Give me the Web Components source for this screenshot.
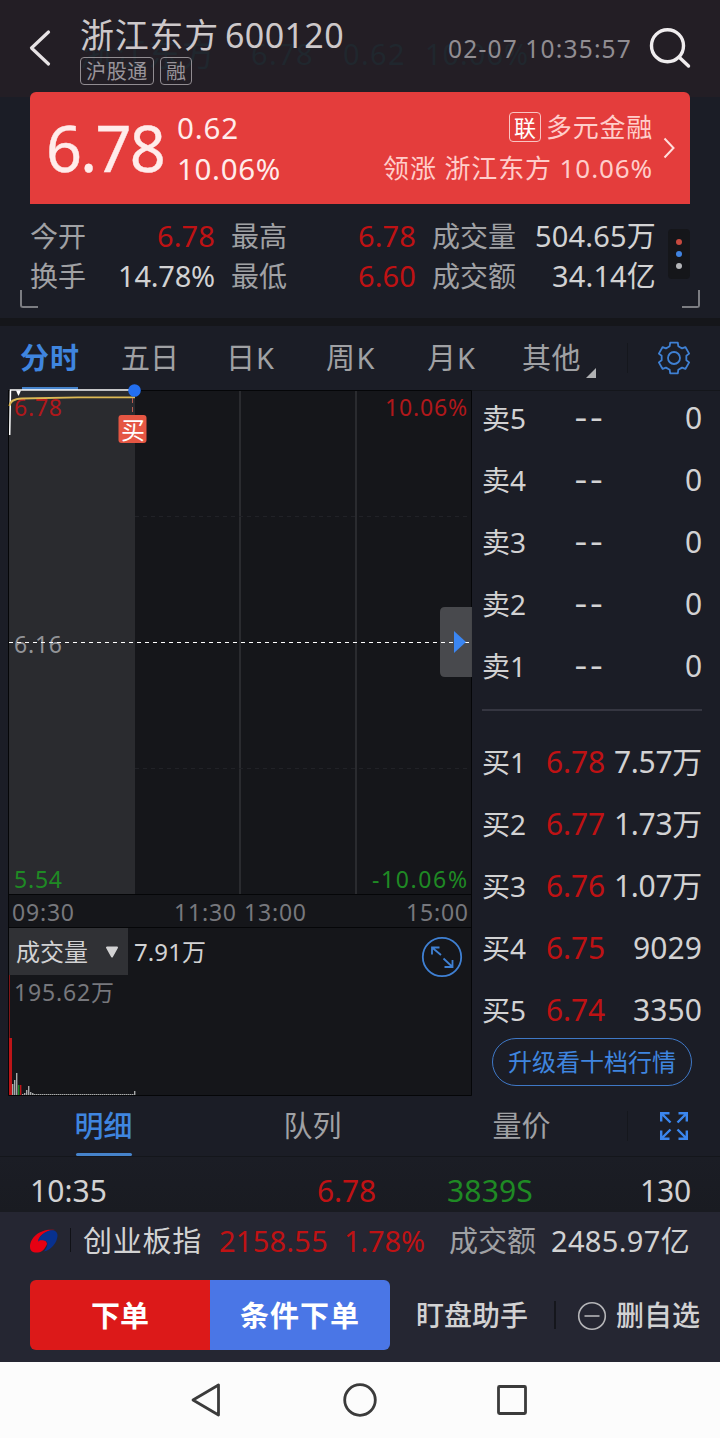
<!DOCTYPE html>
<html lang="zh-CN">
<head>
<meta charset="utf-8">
<meta name="viewport" content="width=device-width">
<title>浙江东方 600120</title>
<style>
    html, body { margin: 0; background: #1b1d26; }
    body {
        width: 720px;
        height: 1438px;
        overflow: hidden;
        font-family: "Noto Sans", "Noto Sans CJK SC", sans-serif;
        color: #d2d2d3;
        --red: #bf1214;
        --green: #1f8a24;
        --blue: #3f85df;
        --muted: #a0a1a4;
        --panel: #1b1d26;
        --dark: #15161a;
    }
    stock-page { display: flex; flex-direction: column; }
</style>
</head>
<body>
<stock-page>
    <stock-header></stock-header>
    <price-card></price-card>
    <stock-stats></stock-stats>
    <period-tabs></period-tabs>
    <market-area></market-area>
    <detail-tabs></detail-tabs>
    <trade-row></trade-row>
    <bottom-bar></bottom-bar>
    <system-nav></system-nav>
</stock-page>

<script>
// small base class, every element only gives its own markup
class BaseElement extends HTMLElement {
    constructor() {
        super()
        this.attachShadow({ mode: 'open' })
        this.shadowRoot.innerHTML = this.template()
    }

    template() {
        return '<slot></slot>'
    }
}

// text on one line, letter spacing is adjusted until the line is `w` pixels wide
class FitText extends BaseElement {
    template() {
        return `
            <style>
                :host { display: inline-block; white-space: nowrap; flex: none; }
            </style>
            <slot></slot>
        `
    }

    connectedCallback() {
        const wanted = Number(this.getAttribute('w'))
        // a flex or grid parent may stretch the box, so measure the text itself
        const range = document.createRange()
        range.selectNodeContents(this)
        const natural = range.getBoundingClientRect().width
        if (wanted && natural) {
            this.style.letterSpacing = ((wanted - natural) / this.textContent.length) + 'px'
        }
    }
}
customElements.define('fit-text', FitText)

class StockPage extends BaseElement {}

class StockHeader extends BaseElement {
    template() {
        return `
            <style>
                :host {
                    display: flex;
                    position: relative;
                    box-sizing: border-box;
                    height: 92px;
                    background: #231e25;
                    padding-left: 28px;
                }
                .back { margin-top: 29px; width: 24px; height: 38px; flex: none; }
                .names { margin-left: 28px; flex: 1; padding-top: 12px; position: relative; }
                .title { display: flex; gap: 6px; font-size: 34px; line-height: 46px; height: 45px; color: #cdc8ca; }
                .badges { display: flex; gap: 6px; }
                .badge {
                    box-sizing: border-box;
                    height: 28px;
                    border: 1px solid #918c91;
                    border-radius: 4px;
                    color: #99949a;
                    font-size: 20px;
                    line-height: 28px;
                    padding: 0 5px;
                }
                .time { position: relative; font-size: 24.5px; line-height: 42px; margin-top: 28px; color: #918d92; }
                .search { width: 44px; height: 44px; margin: 25px 28px 0 16px; flex: none; position: relative; }
                /* faded title left over by the scroll animation */
                .ghost {
                    position: absolute;
                    left: 80px;
                    top: 32px;
                    display: flex;
                    font-size: 29px;
                    line-height: 44px;
                    color: #20272e;
                }
            </style>
            <div class="ghost">
                <fit-text w="136" style="font-size:33px;margin-right:35px">浙江东方</fit-text><fit-text w="63" style="margin-right:29px">6.78</fit-text><fit-text w="63" style="margin-right:19px">0.62</fit-text><fit-text w="104">10.06%</fit-text>
            </div>
            <svg class="back" viewBox="0 0 24 38" fill="none" stroke="#e7e3e5" stroke-width="3.2" stroke-linecap="round" stroke-linejoin="round">
                <path d="M20.5 3 3.5 19 20.5 35"/>
            </svg>
            <div class="names">
                <div class="title"><fit-text w="139">浙江东方</fit-text><fit-text w="119">600120</fit-text></div>
                <div class="badges">
                    <span class="badge"><fit-text w="62">沪股通</fit-text></span>
                    <span class="badge"><fit-text w="20">融</fit-text></span>
                </div>
            </div>
            <div class="time"><fit-text w="184">02-07 10:35:57</fit-text></div>
            <svg class="search" viewBox="0 0 44 44" fill="none" stroke="#efecee" stroke-width="3.4" stroke-linecap="round">
                <circle cx="19.5" cy="20.7" r="16"/><path d="M31.5 32.5 40.5 41"/>
            </svg>
        `
    }
}

class PriceCard extends BaseElement {
    template() {
        return `
            <style>
                :host {
                    display: block;
                    padding: 0 30px;
                    background: linear-gradient(#231e25 5px, var(--panel) 5px);
                }
                .card {
                    display: flex;
                    height: 112px;
                    background: #e43d3c;
                    border-radius: 6px 6px 0 0;
                    color: #ffeceb;
                }
                .price { width: 117px; padding-left: 16px; margin-right: 14px; font-size: 63px; line-height: 112px; -webkit-text-stroke: .4px #ffeceb; }
                .change { display: flex; flex-direction: column; font-size: 29.5px; line-height: 41px; padding-top: 15px; }
                .sector { margin-left: auto; display: flex; flex-direction: column; align-items: flex-end; font-size: 26px; line-height: 41px; padding-top: 15px; color: #ffcdca; }
                .line { display: flex; align-items: center; gap: 5px; height: 41px; }
                .tag { box-sizing: border-box; width: 32px; height: 30px; margin-top: -1px; border: 1px solid #f9c4c2; border-radius: 4px; font-size: 22px; line-height: 28px; text-align: center; color: #fff; }
                svg { width: 14px; height: 24px; margin: 44px 14px 0 9px; }
            </style>
            <div class="card">
                <div class="price"><fit-text w="118">6.78</fit-text></div>
                <div class="change"><fit-text w="62">0.62</fit-text><fit-text w="104">10.06%</fit-text></div>
                <div class="sector">
                    <div class="line"><span class="tag">联</span><fit-text w="107">多元金融</fit-text></div>
                    <div class="line"><fit-text w="270">领涨 浙江东方 10.06%</fit-text></div>
                </div>
                <svg viewBox="0 0 14 24" fill="none" stroke="#ffdedc" stroke-width="2"><path d="M2.5 2.5 11.5 12 2.5 21.5"/></svg>
            </div>
        `
    }
}

class StockStats extends BaseElement {
    template() {
        return `
            <style>
                :host { display: block; height: 114px; border-bottom: 8px solid var(--dark); background: var(--panel); position: relative; }
                .wrap { display: flex; padding: 12px 30px 0; }
                .grid {
                    display: grid;
                    grid-template-columns: 57px 128px 72px 129px 100px 140px;
                    grid-auto-rows: 40px;
                    line-height: 40px;
                    font-size: 29px;
                    text-align: right;
                }
                .k { font-size: 28px; color: var(--muted); text-align: right; }
                .k:first-child, .k:nth-child(7) { text-align: left; }
                .red { color: var(--red); }
                .more {
                    display: flex;
                    flex-direction: column;
                    align-items: center;
                    justify-content: center;
                    gap: 6px;
                    width: 22px;
                    height: 50px;
                    border-radius: 4px;
                    background: var(--dark);
                    margin: 13px 0 0 12px;
                }
                .more i { width: 6px; height: 6px; border-radius: 50%; }
                .corner { position: absolute; width: 16px; height: 16px; top: 86px; border: 0 solid #7c7d82; border-bottom-width: 2px; }
                .left { left: 20px; border-left-width: 2px; border-bottom-left-radius: 3px; }
                .right { right: 20px; border-right-width: 2px; border-bottom-right-radius: 3px; }
            </style>
            <div class="wrap">
                <div class="grid">
                    <span class="k">今开</span><span class="red"><fit-text w="58">6.78</fit-text></span>
                    <span class="k">最高</span><span class="red"><fit-text w="58">6.78</fit-text></span>
                    <span class="k">成交量</span><span><fit-text w="121">504.65万</fit-text></span>
                    <span class="k">换手</span><span><fit-text w="97">14.78%</fit-text></span>
                    <span class="k">最低</span><span class="red"><fit-text w="58">6.60</fit-text></span>
                    <span class="k">成交额</span><span><fit-text w="104">34.14亿</fit-text></span>
                </div>
                <div class="more"><i style="background:#c74a3f"></i><i style="background:#4083e0"></i><i style="background:#b4b5b8"></i></div>
            </div>
            <div class="corner left"></div>
            <div class="corner right"></div>
        `
    }
}

class PeriodTabs extends BaseElement {
    // six teeth, each one is the same points turned by 60 degrees
    gear() {
        const tooth = [[-5.6, -11], [-4.3, -11.8], [-3.8, -15.3], [3.8, -15.3], [4.3, -11.8], [5.6, -11]]
        let points = ''
        for (let i = 0; i < 6; i++) {
            const a = i * Math.PI / 3
            tooth.forEach(([x, y]) => {
                points += (x * Math.cos(a) - y * Math.sin(a)).toFixed(2) + ',' + (x * Math.sin(a) + y * Math.cos(a)).toFixed(2) + ' '
            })
        }
        return points
    }

    template() {
        return `
            <style>
                :host { display: flex; height: 64px; background: var(--panel); color: var(--muted); font-size: 29px; line-height: 64px; }
                .tabs { display: grid; grid-template-columns: 100px 100px 101px 100px 101px 125px; width: 627px; }
                .tabs span { text-align: center; }
                .on { color: var(--blue); font-weight: 700; }
                .line { width: 1px; height: 30px; margin-top: 17px; background: #15171d; }
                .gear { width: 36px; height: 36px; margin: 14px 0 0 28px; }
                .other { display: flex; padding-left: 20px; gap: 5px; }
                .other i { width: 0; height: 0; border-left: 10px solid transparent; border-bottom: 10px solid #b0b1b3; margin-top: 42px; }
            </style>
            <div class="tabs">
                <span class="on"><fit-text w="60">分时</fit-text></span>
                <span>五日</span>
                <span><fit-text w="49">日K</fit-text></span>
                <span><fit-text w="50">周K</fit-text></span>
                <span><fit-text w="49">月K</fit-text></span>
                <span class="other"><fit-text w="59">其他</fit-text><i></i></span>
            </div>
            <div class="line"></div>
            <svg class="gear" viewBox="-18 -18 36 36" fill="none" stroke="#3f80d3" stroke-width="1.8" stroke-linejoin="round">
                <polygon points="${this.gear()}"/><circle r="6"/>
            </svg>
        `
    }
}

class MinuteChart extends BaseElement {
    // height of each volume bar, one per two pixels from the left
    bars() {
        const list = [[12, 11, '#a9aaab'], [14, 15, '#a9aaab'], [16, 22, '#a9aaab'], [18, 10, '#1f8a24'], [20, 10, '#bd1518'],
            [22, 1, '#a9aaab'], [24, 2, '#a9aaab'], [26, 5, '#a9aaab'], [28, 9, '#a9aaab'], [30, 3, '#a9aaab'], [32, 2, '#a9aaab'], [134, 4, '#a9aaab']]
        return list.map(([x, h, c]) => `<rect x="${x}" y="${705 - h}" width="1.4" height="${h}" fill="${c}"/>`).join('')
    }

    template() {
        return `
            <style>
                :host { display: block; width: 472px; height: 706px; }
                svg { display: block; width: 472px; height: 706px; overflow: visible; font-size: 23px; }
                .red { fill: #b0181b; }
                .green { fill: var(--green); }
                .grey { fill: #77787d; }
                .light { fill: #d2d2d3; font-size: 24px; }
            </style>
            <svg viewBox="0 0 472 706">
                <rect x="8" y="0" width="464" height="706" fill="#15161a"/>
                <rect x="9" y="1" width="126" height="503" fill="#2a2b2f"/>
                <path d="M240 1V504M356 1V504" stroke="#2a2b2f" stroke-width="2"/>
                <path d="M135 126.5H471M135 378.5H471" stroke="#212227" stroke-dasharray="4 4"/>
                <path d="M8.5 0V705.5H471.5V.5H8M8 504.5H472M8 537.5H472" fill="none" stroke="#050608"/>
                <path d="M22 -1.5H78" stroke="#4683cb" stroke-width="3"/>

                <text x="14" y="263" textLength="48" fill="#929397">6.16</text>
                <path d="M9 252.5H471" stroke="#fff" stroke-dasharray="4 4"/>
                <path d="M472 217H445Q440 217 440 222V282Q440 287 445 287H472Z" fill="#55565a" fill-opacity=".8"/>
                <path d="M441 252.5H471" stroke="#fff" stroke-dasharray="4 4"/>
                <path d="M454 241 466 252 454 263Z" fill="#3b86f2"/>

                <path d="M9.7 45 10.5 0H134" fill="none" stroke="#fff" stroke-width="1.5"/>
                <path d="M16 .5 18.5 6 21 .5" fill="#fff"/>
                <text class="red" x="14" y="26" textLength="48">6.78</text>
                <path d="M9.5 16Q10 9 22 8.5L78 7.3H135" fill="none" stroke="#ddba55" stroke-width="1.8"/>
                <text class="red" x="385" y="26" textLength="82">10.06%</text>
                <path d="M132.5 8V26" stroke="#b95c50" stroke-dasharray="5 4"/>
                <circle cx="134.5" cy=".5" r="6.3" fill="#236ff0"/>
                <rect x="118.5" y="25" width="28" height="28" rx="3" fill="#e55643"/>
                <text x="121" y="49" font-size="24" fill="#fff">买</text>
                <text class="green" x="14" y="498" textLength="48">5.54</text>
                <text class="green" x="372" y="498" textLength="95">-10.06%</text>

                <text class="grey" x="12" y="531" textLength="62">09:30</text>
                <text class="grey" x="174" y="531" textLength="62">11:30</text>
                <text class="grey" x="244" y="531" textLength="62">13:00</text>
                <text class="grey" x="406" y="531" textLength="62">15:00</text>

                <rect x="9" y="538" width="119" height="47" fill="#303135"/>
                <text class="light" x="16" y="571">成交量</text>
                <path d="M107 557.5H117L112 566.5Z" fill="#d2d2d3" stroke="#d2d2d3" stroke-width="2" stroke-linejoin="round"/>
                <text class="light" x="134" y="571" textLength="72">7.91万</text>
                <text class="grey" x="14" y="611" textLength="100">195.62万</text>
                <g stroke="#3f80d3" stroke-width="1.8" fill="none">
                    <circle cx="442" cy="567" r="19.2"/>
                    <path d="M432 564.5V557.5H439.5M432 557.5 441 565M443.5 568.5 452.5 577M452.5 570V577H444.5"/>
                </g>
                <rect x="9" y="585" width="1" height="63" fill="#801719"/>
                <rect x="9" y="648" width="3" height="57" fill="#bd1518"/>
                <path d="M32 704.5H134" stroke="#a9aaab" stroke-dasharray="1.5 .5"/>
                ${this.bars()}
            </svg>
        `
    }
}

class BookRow extends BaseElement {
    template() {
        return `
            <style>
                :host { display: grid; grid-template-columns: 44px 79px 97px; height: 62px; line-height: 60px; font-size: 30px; text-align: right; }
                .name { font-size: 28px; text-align: left; }
                .price { font-family: Inter, sans-serif; }
                :host([deal]) .price { color: var(--red); font-family: inherit; }
            </style>
            <span class="name"><slot name="name"></slot></span>
            <span class="price"><slot name="price"></slot></span>
            <span><slot name="count"></slot></span>
        `
    }
}

class OrderBook extends BaseElement {
    row([name, price, count, w]) {
        const deal = price === '--' ? '' : 'deal'
        return `<book-row ${deal}>
            <fit-text slot="name" w="44">${name}</fit-text>
            <fit-text slot="price" w="${deal ? 59 : 31}" ${deal ? '' : 'style="font-family:Inter"'}>${price}</fit-text>
            <fit-text slot="count" w="${w}">${count}</fit-text>
        </book-row>`
    }

    template() {
        const sell = ['卖5', '卖4', '卖3', '卖2', '卖1'].map(n => [n, '--', '0', 17])
        const buy = [['买1', '6.78', '7.57万', 88], ['买2', '6.77', '1.73万', 88], ['买3', '6.76', '1.07万', 88], ['买4', '6.75', '9029', 69], ['买5', '6.74', '3350', 69]]
        return `
            <style>
                :host { display: block; flex: 1; box-sizing: border-box; padding: 0 18px 0 10px; height: 706px; border-top: 1px solid #14161b; }
                .sell { height: 318px; }
                .rows { margin-top: -3px; }
                .sell, .buy { display: flow-root; }
                .buy { border-top: 2px solid #353641; padding-top: 21px; height: 306px; }
                .upgrade {
                    box-sizing: border-box;
                    width: 200px;
                    height: 48px;
                    border: 1.5px solid #3f78c6;
                    border-radius: 24px;
                    margin: 0 10px;
                    text-align: center;
                    line-height: 46px;
                    font-size: 24px;
                    color: var(--blue);
                }
            </style>
            <div class="sell"><div class="rows">${sell.map(this.row).join('')}</div></div>
            <div class="buy">${buy.map(this.row).join('')}</div>
            <div class="upgrade">升级看十档行情</div>
        `
    }
}

class MarketArea extends BaseElement {
    template() {
        return `
            <style>
                :host { display: flex; height: 706px; background: var(--panel); }
            </style>
            <minute-chart></minute-chart>
            <order-book></order-book>
        `
    }
}

class DetailTabs extends BaseElement {
    template() {
        return `
            <style>
                :host { display: flex; box-sizing: border-box; height: 61px; background: var(--panel); border-bottom: 1px solid #14161b; color: var(--muted); font-size: 29px; line-height: 60px; }
                .tabs { display: grid; grid-template-columns: repeat(3, 209px); text-align: center; margin-left: -1px; width: 628px; }
                .on { color: var(--blue); font-weight: 500; }
                .on::after { content: ""; display: block; width: 56px; height: 3px; margin: -3px auto 0; background: #4683cb; border-radius: 2px; }
                .line { width: 1px; height: 30px; margin-top: 15px; background: #15171d; }
                svg { width: 28px; height: 28px; margin: 16px 0 0 32px; }
            </style>
            <div class="tabs"><span class="on">明细</span><span>队列</span><span>量价</span></div>
            <div class="line"></div>
            <svg viewBox="0 0 28 28" fill="none" stroke="#3b86ee" stroke-width="2.4">
                <path d="M1.2 9.5V1.2H9.5M1.5 1.5 10.5 10.5M18.5 1.2H26.8V9.5M26.5 1.5 17.5 10.5M1.2 18.5V26.8H9.5M1.5 26.5 10.5 17.5M18.5 26.8H26.8V18.5M26.5 26.5 17.5 17.5"/>
            </svg>
        `
    }
}

class TradeRow extends BaseElement {
    template() {
        return `
            <style>
                :host { display: grid; grid-template-columns: 176px 170px 157px 158px; height: 55px; padding: 0 30px; background: linear-gradient(#1b1d25, #191b21); font-size: 30px; line-height: 68px; text-align: right; }
                .time { text-align: left; }
            </style>
            <span class="time"><fit-text w="77">10:35</fit-text></span>
            <span style="color:var(--red)"><fit-text w="59">6.78</fit-text></span>
            <span style="color:var(--green)"><fit-text w="86">3839S</fit-text></span>
            <span><fit-text w="51">130</fit-text></span>
        `
    }
}

class BottomBar extends BaseElement {
    template() {
        return `
            <style>
                :host { display: block; height: 150px; background: #252632; }
                .index { display: flex; height: 68px; padding: 0 30px; font-size: 29px; line-height: 57px; }
                .logo { width: 28px; height: 28px; margin-top: 15px; }
                .line { width: 1px; height: 24px; margin: 16px 12px 0; background: #101116; }
                .red { color: var(--red); }
                .actions { display: flex; align-items: center; height: 70px; font-size: 28px; line-height: 72px; }
                .btn { width: 180px; height: 70px; text-align: center; font-size: 29px; font-weight: 700; color: #fff; }
                .order { margin-left: 30px; background: #dc1919; border-radius: 6px 0 0 6px; }
                .plan { background: #4a76e6; border-radius: 0 6px 6px 0; }
                .watch { margin-left: 26px; font-weight: 500; }
                .sep { width: 2px; height: 28px; margin: 0 21px 0 26px; background: #15161c; }
                .minus { width: 30px; height: 30px; margin: 2px 9px 0 0; }
            </style>
            <div class="index">
                <svg class="logo" viewBox="0 0 28 28">
                    <path d="M0 20C0 10 11 1 25 3C18 3 10 7 8 14C11 11 17 13 17 17C15 22 12 25 8 25.500C3 26 0 24 0 20Z" fill="#e60012"/>
                    <path d="M16 5C21 2 28 3 27.500 9C27 16 21 23 14 24.500C18 20 19 14 14 13.500C11 13 9 13 8 15C9 10 12 7 16 5Z" fill="#08318f"/>
                </svg>
                <div class="line"></div>
                <fit-text w="119">创业板指</fit-text>
                <fit-text class="red" w="109" style="margin-left:17px">2158.55</fit-text>
                <fit-text class="red" w="81" style="margin-left:16px">1.78%</fit-text>
                <fit-text w="87" style="margin-left:24px;color:var(--muted)">成交额</fit-text>
                <fit-text w="139" style="margin-left:15px">2485.97亿</fit-text>
            </div>
            <div class="actions">
                <div class="btn order">下单</div>
                <div class="btn plan"><fit-text w="120">条件下单</fit-text></div>
                <div class="watch"><fit-text w="112">盯盘助手</fit-text></div>
                <div class="sep"></div>
                <svg class="minus" viewBox="0 0 30 30" fill="none" stroke="#b5b5b8" stroke-width="1.6"><circle cx="15" cy="15" r="13.3"/><path d="M7.5 15H22.5"/></svg>
                <fit-text w="84" style="font-weight:500">删自选</fit-text>
            </div>
        `
    }
}

class SystemNav extends BaseElement {
    template() {
        return `
            <style>
                :host { display: flex; height: 76px; padding: 0 190px; background: #fcfcfc; justify-content: space-between; align-items: center; }
                svg { width: 36px; height: 36px; fill: none; stroke: #3b3b3b; stroke-width: 2.8; stroke-linejoin: round; }
            </style>
            <svg viewBox="0 0 36 36"><path d="M28.5 3V33L3 18Z"/></svg>
            <svg viewBox="0 0 36 36"><circle cx="18" cy="18" r="15.3"/></svg>
            <svg viewBox="0 0 36 36"><rect x="4.500" y="4.500" width="27" height="27" rx="1"/></svg>
        `
    }
}

customElements.define('minute-chart', MinuteChart)
customElements.define('book-row', BookRow)
customElements.define('order-book', OrderBook)
customElements.define('stock-header', StockHeader)
customElements.define('price-card', PriceCard)
customElements.define('stock-stats', StockStats)
customElements.define('period-tabs', PeriodTabs)
customElements.define('market-area', MarketArea)
customElements.define('detail-tabs', DetailTabs)
customElements.define('trade-row', TradeRow)
customElements.define('bottom-bar', BottomBar)
customElements.define('system-nav', SystemNav)
customElements.define('stock-page', StockPage)
</script>
</body>
</html>
